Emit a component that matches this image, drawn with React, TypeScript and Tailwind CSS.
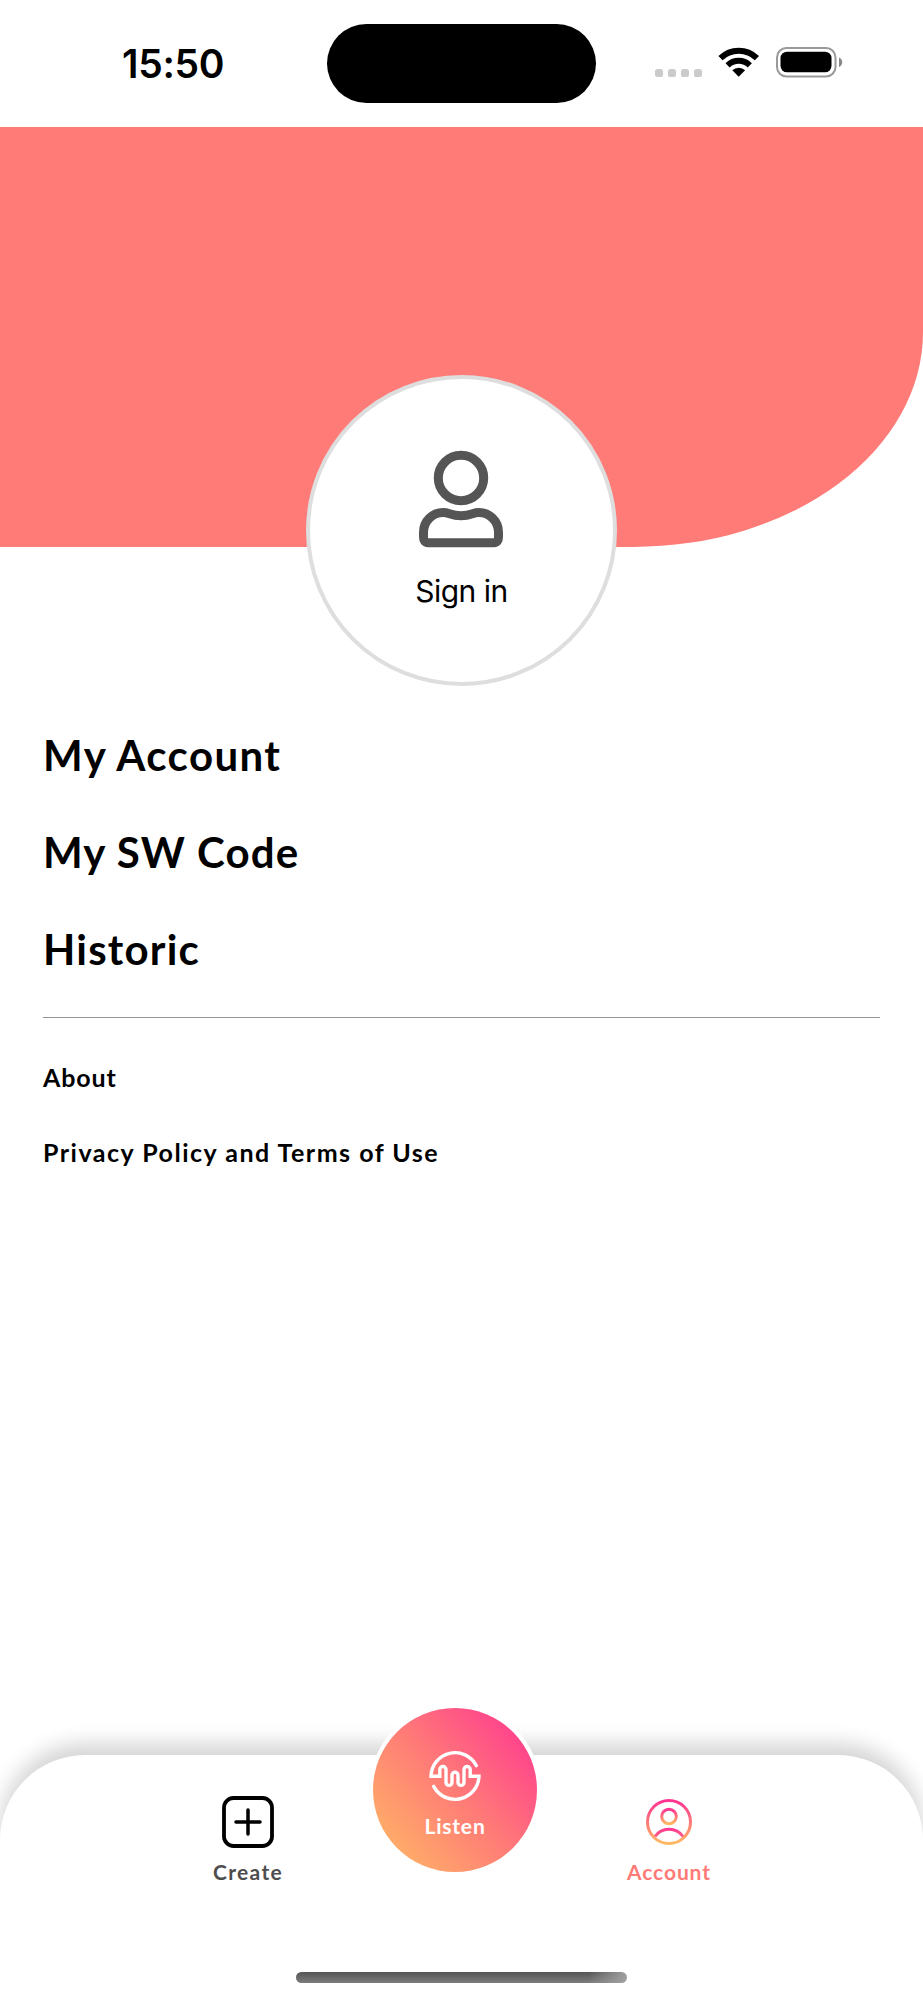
import type { ReactNode } from 'react';

const mainLinks = [
  { label: 'My Account', tracking: 'tracking-[1.4px]' },
  { label: 'My SW Code', tracking: 'tracking-[1.1px]' },
  { label: 'Historic', tracking: 'tracking-[1.2px]' },
];

const secondaryLinks = [
  { label: 'About', tracking: 'tracking-[0.9px]' },
  { label: 'Privacy Policy and Terms of Use', tracking: 'tracking-[1.5px]' },
];

function StatusBar() {
  return (
    <div className="relative h-[127px] bg-white">
      <span className="absolute left-[122px] top-[39px] font-['Inter',sans-serif] text-[39px] leading-[50px] font-semibold tracking-[-0.3px]">
        15:50
      </span>
      <div className="absolute left-[327px] top-6 h-[79px] w-[269px] rounded-full bg-black" />
      <svg className="absolute left-[650px] top-[40px]" width="200" height="44" viewBox="0 0 200 44">
        <g fill="#cbcbcb">
          <rect x="5" y="29" width="8" height="8" rx="2.6" />
          <rect x="18" y="29" width="8" height="8" rx="2.6" />
          <rect x="31" y="29" width="8" height="8" rx="2.6" />
          <rect x="44" y="29" width="8" height="8" rx="2.6" />
        </g>
        <g fill="none" stroke="#000" strokeWidth="6">
          <path d="M70.5 18.2a26 26 0 0 1 36.4 0" />
          <path d="M77.6 25.3a16 16 0 0 1 22.2 0" />
        </g>
        <path d="M82.3 30.3a9.4 9.4 0 0 1 12.8 0L88.7 36.8z" fill="#000" />
        <rect x="127" y="8" width="58.5" height="28.5" rx="9.5" fill="none" stroke="#999" strokeWidth="2" />
        <rect x="130.5" y="11.7" width="51" height="20.6" rx="6.5" fill="#000" />
        <path d="M189 17.500c4.300 1.500 4.300 8 0 9.500z" fill="#888" />
      </svg>
    </div>
  );
}

function PersonIcon() {
  return (
    <svg className="-ml-px" width="86" height="98" viewBox="0 0 86 98" fill="none" stroke="#555" strokeWidth="9">
      <circle cx="43" cy="28" r="22.7" />
      <path d="M5.500 87V82.500A19.800 19.800 0 0 1 25.500 62.500C31 62.500 33 65.700 43 65.700S55 62.500 60.500 62.500A19.800 19.800 0 0 1 80.500 82.500V87Q80.500 92.700 76 92.700H10Q5.500 92.700 5.500 87Z" />
    </svg>
  );
}

function NavItem({ icon, label, className }: { icon: ReactNode; label: string; className: string }) {
  return (
    <button className={`flex w-[120px] flex-col items-center text-[21px] leading-[26px] font-bold ${className}`}>
      <span className="flex h-[52px] items-center">{icon}</span>
      <span className="mt-[11px]">{label}</span>
    </button>
  );
}

function CreateIcon() {
  return (
    <svg width="52" height="52" viewBox="0 0 52 52" fill="none" stroke="#000" strokeLinecap="round">
      <rect x="2" y="2" width="48" height="48" rx="9.5" strokeWidth="3.8" />
      <path d="M26 14v24M14 26h24" strokeWidth="3.5" />
    </svg>
  );
}

function AccountIcon() {
  return (
    <svg width="46" height="46" viewBox="0 0 46 46" fill="none" stroke="url(#accountRing)" strokeWidth="3">
      <defs>
        <linearGradient id="accountRing" x1="0" y1="0" x2="0" y2="1">
          <stop offset="0" stopColor="#ff3392" />
          <stop offset="1" stopColor="#ffb963" />
        </linearGradient>
        <linearGradient id="accountBody" gradientUnits="userSpaceOnUse" x1="0" y1="29" x2="0" y2="40">
          <stop offset="0" stopColor="#ff3392" />
          <stop offset="1" stopColor="#ff6f80" />
        </linearGradient>
      </defs>
      <circle cx="23" cy="23" r="21.5" />
      <circle cx="23" cy="17.5" r="7.3" />
      <path d="M9 37.500c3.500-5 8-7.200 14-7.200s10.500 2.200 14 7.200" stroke="url(#accountBody)" />
    </svg>
  );
}

function WaveIcon() {
  return (
    <svg width="52" height="52" viewBox="0 0 52 52" fill="none" stroke="#fff" strokeWidth="3.4" strokeLinecap="round">
      <path d="M47.3 15.6A24 24 0 0 0 2 26.2H10.800V19.600a3.100 3.100 0 0 1 6.200 0V32.400a3 3 0 0 0 6 0V25.300a3 3 0 0 1 6 0V32.400a3 3 0 0 0 6 0V19.600a3.100 3.100 0 0 1 6.200 0V26.200H50A24 24 0 0 1 4.700 36.400" />
    </svg>
  );
}

export default function App() {
  return (
    <div className="flex h-[2000px] w-[923px] flex-col overflow-hidden bg-white font-['Lato',sans-serif] text-black">
      <StatusBar />

      <header className="relative h-[420px] rounded-br-[290px_215px] bg-[#ff7b77]">
        <button className="absolute left-[306px] top-[248px] flex h-[311px] w-[311px] flex-col items-center rounded-full border-4 border-[#dedede] bg-white pt-[71px]">
          <PersonIcon />
          <span className="mt-[25px] font-['Inter',sans-serif] text-[30px] leading-[36px] tracking-[-0.5px]">
            Sign in
          </span>
        </button>
      </header>

      <main className="flex flex-1 flex-col px-[43px] pt-[180px]">
        <nav className="flex flex-col items-start border-b border-[#939393] pb-10">
          {mainLinks.map(({ label, tracking }) => (
            <a key={label} className={`mb-[41px] text-[42px] leading-[56px] font-bold last:mb-0 ${tracking}`}>
              {label}
            </a>
          ))}
        </nav>
        <nav className="flex flex-col items-start gap-[39px] pt-[41px] text-[25px] leading-[36px] font-bold">
          {secondaryLinks.map(({ label, tracking }) => (
            <a key={label} className={tracking}>
              {label}
            </a>
          ))}
        </nav>
      </main>

      <footer className="relative h-[245px] rounded-t-[85px] bg-white shadow-[0_-12px_20px_rgba(0,0,0,0.165)]">
        <div className="flex justify-between pl-[188px] pr-[194px] pt-[41px]">
          <NavItem icon={<CreateIcon />} label="Create" className="tracking-[1.3px] text-[#4d4d4d]" />
          <NavItem icon={<AccountIcon />} label="Account" className="tracking-[0.9px] text-[#ff7b77]" />
        </div>
        <button className="absolute left-[369px] top-[-51px] flex h-[172px] w-[172px] flex-col items-center rounded-full bg-white p-[4px]">
          <span className="flex h-full w-full flex-col items-center rounded-full bg-[linear-gradient(48deg,#ffb366_8%,#ff7b77_50%,#ff428d_88%)] pt-[42px] text-[21px] leading-[26px] font-bold tracking-[0.8px] text-white">
            <WaveIcon />
            <span className="mt-[11px]">Listen</span>
          </span>
        </button>
        <div className="absolute bottom-[17px] left-[296px] h-[11px] w-[331px] rounded-full bg-[linear-gradient(100deg,transparent_88%,#a3a3a3_100%),linear-gradient(#545454,#7c7c7c)]" />
      </footer>
    </div>
  );
}
